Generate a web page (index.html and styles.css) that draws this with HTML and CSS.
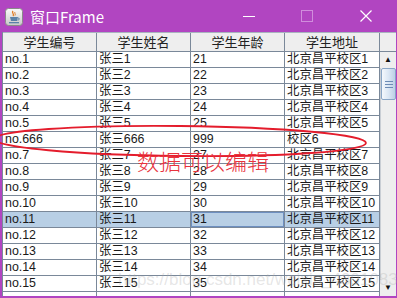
FILE: index.html
```html
<html lang="zh-CN">
<head>
    <meta charset="UTF-8">
    <title>窗口Frame</title>
    <link rel="stylesheet" href="styles.css">
</head>
<body>
    <div class="window">
        <div class="titlebar">
            <svg class="app_icon" width="18" height="18" viewBox="0 0 18 18">
                <defs>
                    <linearGradient id="ig" x1="0" y1="0" x2="0" y2="1">
                        <stop offset="0" stop-color="#fafafa"/>
                        <stop offset="1" stop-color="#c8c8c8"/>
                    </linearGradient>
                </defs>
                <rect x="0.5" y="0.5" width="17" height="17" rx="3" fill="url(#ig)" stroke="#8a8a8a"/>
                <path d="M8 3 C6 5 10 6 8 8" stroke="#e07a1f" stroke-width="1.3" fill="none"/>
                <path d="M10 4 C9 5 11 6 10 7.5" stroke="#e07a1f" stroke-width="1" fill="none"/>
                <path d="M5 9 L13 9 L12 13 L6 13 Z" fill="#5b82a8"/>
                <path d="M13 10 C15 10 15 12 12.5 12" stroke="#5b82a8" stroke-width="1" fill="none"/>
                <rect x="4" y="14" width="10" height="1.3" fill="#5b82a8"/>
            </svg>
            <span class="title">窗口Frame</span>
            <div class="controls">
                <span class="ctl ctl_min"></span>
                <span class="ctl ctl_max"></span>
                <svg class="ctl ctl_close" width="12" height="12" viewBox="0 0 12 12">
                    <path d="M0.5 0.5 L11.5 11.5 M11.5 0.5 L0.5 11.5" stroke="#fff" stroke-width="1.2"/>
                </svg>
            </div>
        </div>

        <div class="pane">
            <div class="table">
                <div class="row head">
                    <div class="cell">学生编号</div>
                    <div class="cell">学生姓名</div>
                    <div class="cell">学生年龄</div>
                    <div class="cell">学生地址</div>
                </div>
                <div class="row"><div class="cell">no.1</div><div class="cell">张三1</div><div class="cell">21</div><div class="cell">北京昌平校区1</div></div>
                <div class="row"><div class="cell">no.2</div><div class="cell">张三2</div><div class="cell">22</div><div class="cell">北京昌平校区2</div></div>
                <div class="row"><div class="cell">no.3</div><div class="cell">张三3</div><div class="cell">23</div><div class="cell">北京昌平校区3</div></div>
                <div class="row"><div class="cell">no.4</div><div class="cell">张三4</div><div class="cell">24</div><div class="cell">北京昌平校区4</div></div>
                <div class="row"><div class="cell">no.5</div><div class="cell">张三5</div><div class="cell">25</div><div class="cell">北京昌平校区5</div></div>
                <div class="row"><div class="cell">no.666</div><div class="cell">张三666</div><div class="cell">999</div><div class="cell">校区6</div></div>
                <div class="row"><div class="cell">no.7</div><div class="cell">张三7</div><div class="cell">27</div><div class="cell">北京昌平校区7</div></div>
                <div class="row"><div class="cell">no.8</div><div class="cell">张三8</div><div class="cell">28</div><div class="cell">北京昌平校区8</div></div>
                <div class="row"><div class="cell">no.9</div><div class="cell">张三9</div><div class="cell">29</div><div class="cell">北京昌平校区9</div></div>
                <div class="row"><div class="cell">no.10</div><div class="cell">张三10</div><div class="cell">30</div><div class="cell">北京昌平校区10</div></div>
                <div class="row selected"><div class="cell">no.11</div><div class="cell">张三11</div><div class="cell focus">31</div><div class="cell">北京昌平校区11</div></div>
                <div class="row"><div class="cell">no.12</div><div class="cell">张三12</div><div class="cell">32</div><div class="cell">北京昌平校区12</div></div>
                <div class="row"><div class="cell">no.13</div><div class="cell">张三13</div><div class="cell">33</div><div class="cell">北京昌平校区13</div></div>
                <div class="row"><div class="cell">no.14</div><div class="cell">张三14</div><div class="cell">34</div><div class="cell">北京昌平校区14</div></div>
                <div class="row"><div class="cell">no.15</div><div class="cell">张三15</div><div class="cell">35</div><div class="cell">北京昌平校区15</div></div>
                <div class="row"><div class="cell"></div><div class="cell"></div><div class="cell"></div><div class="cell"></div></div>
            </div>
            <div class="vbar">
                <div class="corner"></div>
                <div class="sbtn">&#9650;</div>
                <div class="track">
                    <div class="thumb"><span></span><span></span><span></span></div>
                </div>
                <div class="sbtn">&#9660;</div>
            </div>
        </div>
    </div>

    <!-- annotation drawn on top of the screenshot -->
    <svg class="mark" width="397" height="298" viewBox="0 0 397 298">
        <ellipse cx="180" cy="141" rx="186" ry="15" transform="rotate(0.6 180 141)" fill="none" stroke="#e41c2c" stroke-width="1.8"/>
    </svg>
    <div class="note">数据可以编辑</div>
    <div class="watermark">https://blog.csdn.net/weixin_43910835</div>
</body>
</html>
```

FILE: styles.css
```css
body {
    margin: 0;
    width: 397px;
    height: 298px;
    overflow: hidden;
    background: #b145c1;
    font-family: "Liberation Sans", "Noto Sans CJK SC", sans-serif;
    position: relative;
}
.window {
    display: flex;
    flex-direction: column;
    height: 298px;
}
.titlebar {
    height: 32px;
    display: flex;
    align-items: center;
    color: #fff;
}
.app_icon {
    margin-left: 5px;
    margin-top: 1px;
}
.title {
    margin-left: 7px;
    font-size: 15px;
    font-family: "Noto Sans CJK SC", "Liberation Sans", sans-serif;
    line-height: 1;
    margin-top: 1px;
}
.controls {
    margin-left: auto;
    display: flex;
    align-items: center;
    height: 32px;
}
.ctl {
    display: block;
}
.ctl_min {
    width: 12px;
    height: 1px;
    background: #fff;
    margin-right: 46px;
    margin-top: 1px;
}
.ctl_max {
    width: 10px;
    height: 10px;
    border: 1px solid #d08ddc;
    margin-right: 47px;
}
.ctl_close {
    margin-right: 25px;
}

.pane {
    flex: 1;
    min-height: 0;
    display: flex;
    margin: 0 1px 2px 2px;
    background: #fff;
    overflow: hidden;
}
.table {
    width: 378px;
    border-left: 1px solid #7a8899;
    font-size: 12.4px;
    color: #1a1a1a;
}
.row {
    display: grid;
    grid-template-columns: 94px 94px 94px 95px;
    height: 16px;
    border-bottom: 1px solid #7a8899;
    box-sizing: border-box;
}
.cell {
    border-right: 1px solid #7a8899;
    padding-left: 2px;
    line-height: 15px;
    white-space: nowrap;
    overflow: hidden;
}
.row.head {
    height: 20px;
    background: #eeeeee;
    border-top: 1px solid #a9b4bf;
}
.head .cell {
    text-align: center;
    padding-left: 0;
    font-size: 13px;
    line-height: 18px;
    color: #222;
    font-family: "Noto Sans CJK SC", sans-serif;
}
.row.selected {
    background: #b8cfe5;
}
.cell.focus {
    box-shadow: inset 0 0 0 1px #6d8fc0;
}

.vbar {
    width: 16px;
    display: flex;
    flex-direction: column;
    background: #eeeeee;
}
.corner {
    height: 20px;
    box-sizing: border-box;
    border-top: 1px solid #a9b4bf;
    border-bottom: 1px solid #7a8899;
}
.sbtn {
    height: 16px;
    font-size: 8px;
    text-align: center;
    line-height: 16px;
    color: #111;
    background: #eeeeee;
}
.track {
    flex: 1;
    box-sizing: border-box;
    border-left: 1px solid #c9ced4;
}
.thumb {
    height: 32px;
    box-sizing: border-box;
    border: 1px solid #89a6c6;
    border-radius: 2px;
    background: linear-gradient(to right, #f4f8fc, #dbe7f4 50%, #bcd0e6);
    display: flex;
    flex-direction: column;
    justify-content: center;
    align-items: center;
    gap: 2px;
}
.thumb span {
    width: 8px;
    height: 1px;
    background: #6d8cb5;
}

.mark {
    position: absolute;
    left: 0;
    top: 0;
}
.note {
    position: absolute;
    left: 137px;
    top: 148px;
    font-size: 22px;
    line-height: 24px;
    color: #e8333d;
    font-family: "Noto Sans CJK SC", sans-serif;
    font-weight: 300;
}
.watermark {
    position: absolute;
    left: 118px;
    top: 270px;
    font-size: 17px;
    color: rgba(170, 170, 170, 0.3);
    white-space: nowrap;
}
```
